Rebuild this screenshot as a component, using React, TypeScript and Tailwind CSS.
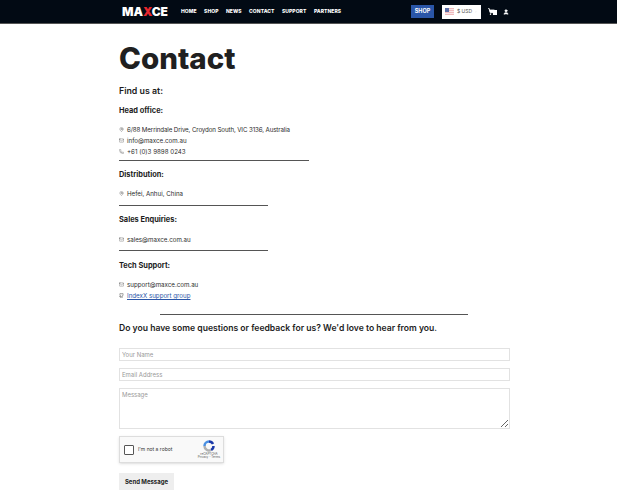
import React from 'react';
import { Mail, MapPin, Phone, ChevronDown, ShoppingCart, User, Github } from 'lucide-react';

const navItems = ['HOME', 'SHOP', 'NEWS', 'CONTACT', 'SUPPORT', 'PARTNERS'];

const Flag = () => (
  <svg width="9" height="7" viewBox="0 0 9 7" className="shrink-0">
    <rect width="9" height="7" fill="#f0b9bd" />
    <rect y="1" width="9" height="1" fill="#f7e8e8" />
    <rect y="3" width="9" height="1" fill="#f7e8e8" />
    <rect y="5" width="9" height="1" fill="#f7e8e8" />
    <rect width="4" height="4" fill="#5b6ea6" />
  </svg>
);

const InfoRow = ({ icon, children }: { icon: React.ReactNode; children: React.ReactNode }) => (
  <div className="flex items-center h-[11px] text-[6.2px] leading-[11px] text-[#2c2c2c]">
    <span className="w-[8px] flex items-center text-[#666666]">{icon}</span>
    {children}
  </div>
);

const Rule = ({ className }: { className: string }) => <div className={`h-px bg-[#555555] ${className}`} />;

const Label = ({ children, className }: { children: React.ReactNode; className: string }) => (
  <div className={`text-[7.4px] leading-[11px] font-bold text-[#1c1c1c] ${className}`}>{children}</div>
);

export default function App() {
  return (
    <div className="w-[617px] h-[500px] overflow-hidden bg-white font-['Inter','Liberation_Sans',sans-serif]">
      {/* header */}
      <div className="h-[24px] bg-[#020a14] border-b border-[#555555] flex items-center pl-[122px] text-white">
        <div className="w-[59px] text-[12px] leading-none font-black font-['Inter',sans-serif]">
          MA<span className="text-[#e8262d]">X</span>CE
        </div>
        <nav className="flex gap-[7.5px] w-[230px] text-[5px] font-extrabold tracking-[0.05px] whitespace-nowrap">
          {navItems.map(item => (
            <span key={item}>{item}</span>
          ))}
        </nav>
        <div className="w-[23px] h-[13px] bg-[#2a56a8] flex items-center justify-center text-[5.5px] font-bold">SHOP</div>
        <div className="ml-[8px] w-[39px] h-[14px] bg-white flex items-center pl-[3px] gap-[3px] text-[5px] text-[#555555] whitespace-nowrap">
          <Flag />
          <span>$ USD</span>
          <ChevronDown size={6} className="ml-auto mr-[4px] text-[#999999]" />
        </div>
        <div className="ml-[7px] flex items-center gap-[6px]">
          <div className="relative">
            <ShoppingCart size={7} strokeWidth={3} fill="white" />
            <span className="absolute left-[5px] top-[2px] w-[4px] h-[5px] bg-white" />
          </div>
          <User size={6} strokeWidth={3} fill="white" className="ml-[2px]" />
        </div>
      </div>

      {/* content */}
      <main className="pl-[119px] w-[510px]">
        <h1 className="mt-[14px] text-[29.5px] leading-[40px] font-extrabold text-[#202020]">Contact</h1>
        <h2 className="mt-[6px] text-[8.8px] leading-[13px] font-semibold text-[#1c1c1c]">Find us at:</h2>
        <Label className="mt-[8px] mb-[8px]">Head office:</Label>
        <InfoRow icon={<MapPin size={5} />}>
          <span className="tracking-[-0.12px]">6/88 Merrindale Drive, Croydon South, VIC 3136, Australia</span>
        </InfoRow>
        <InfoRow icon={<Mail size={5} />}>info@maxce.com.au</InfoRow>
        <InfoRow icon={<Phone size={5} />}>+61 (0)3 9898 0243</InfoRow>
        <Rule className="w-[190px] mt-[3px]" />
        <Label className="mt-[8px] mb-[8px]">Distribution:</Label>
        <InfoRow icon={<MapPin size={5} />}>Hefei, Anhui, China</InfoRow>
        <Rule className="w-[149px] mt-[6px]" />
        <Label className="mt-[8px] mb-[9px]">Sales Enquiries:</Label>
        <InfoRow icon={<Mail size={5} />}>sales@maxce.com.au</InfoRow>
        <Rule className="w-[149px] mt-[5px]" />
        <Label className="mt-[9px] mb-[8px]">Tech Support:</Label>
        <InfoRow icon={<Mail size={5} />}>support@maxce.com.au</InfoRow>
        <InfoRow icon={<Github size={5} strokeWidth={3} />}>
          <a className="text-[#2a56a8] underline">IndexX support group</a>
        </InfoRow>
        <Rule className="w-[308px] ml-[41px] mt-[13px]" />
        <h2 className="mt-[7px] text-[8.6px] leading-[13px] font-semibold text-[#1c1c1c]">
          Do you have some questions or feedback for us? We'd love to hear from you.
        </h2>

        <form className="mt-[13px] flex flex-col gap-[7px] w-[391px]">
          <input
            placeholder="Your Name"
            className="h-[13px] border border-[#e2e2e2] px-[2px] text-[6px] placeholder:text-[#999999] outline-none"
          />
          <input
            placeholder="Email Address"
            className="h-[13px] border border-[#e2e2e2] px-[2px] text-[6px] placeholder:text-[#999999] outline-none"
          />
          <textarea
            placeholder="Message"
            className="h-[41px] border border-[#e2e2e2] px-[2px] py-[1px] text-[6px] placeholder:text-[#999999] outline-none"
          />
        </form>

        <div className="mt-[7px] w-[105px] h-[27px] bg-[#f9f9f9] border border-[#dddddd] shadow-sm flex items-center pl-[4px]">
          <div className="w-[10px] h-[10px] bg-white border-[1.5px] border-[#555555] rounded-[1px]" />
          <span className="ml-[4px] text-[5px] text-[#333333]">I'm not a robot</span>
          <div className="ml-auto mr-[2px] flex flex-col items-center w-[24px] whitespace-nowrap">
            <svg width="12" height="12" viewBox="0 0 24 24" fill="none" strokeWidth="5">
              <path d="M12 3a9 9 0 0 1 8 5" stroke="#1c3aa9" />
              <path d="M21 12a9 9 0 0 1-5 8" stroke="#1c3aa9" />
              <path d="M3 12a9 9 0 0 1 9-9" stroke="#4a90e2" />
              <path d="M16 20a9 9 0 0 1-13-8" stroke="#b0b0b0" />
            </svg>
            <span className="text-[3px] leading-[4px] text-[#555555]">reCAPTCHA</span>
            <span className="text-[3px] leading-[3px] text-[#555555]">Privacy - Terms</span>
          </div>
        </div>

        <button className="mt-[10px] w-[55px] h-[17px] bg-[#eeeeee] text-[6px] font-bold text-[#222222]">Send Message</button>
      </main>
    </div>
  );
}
